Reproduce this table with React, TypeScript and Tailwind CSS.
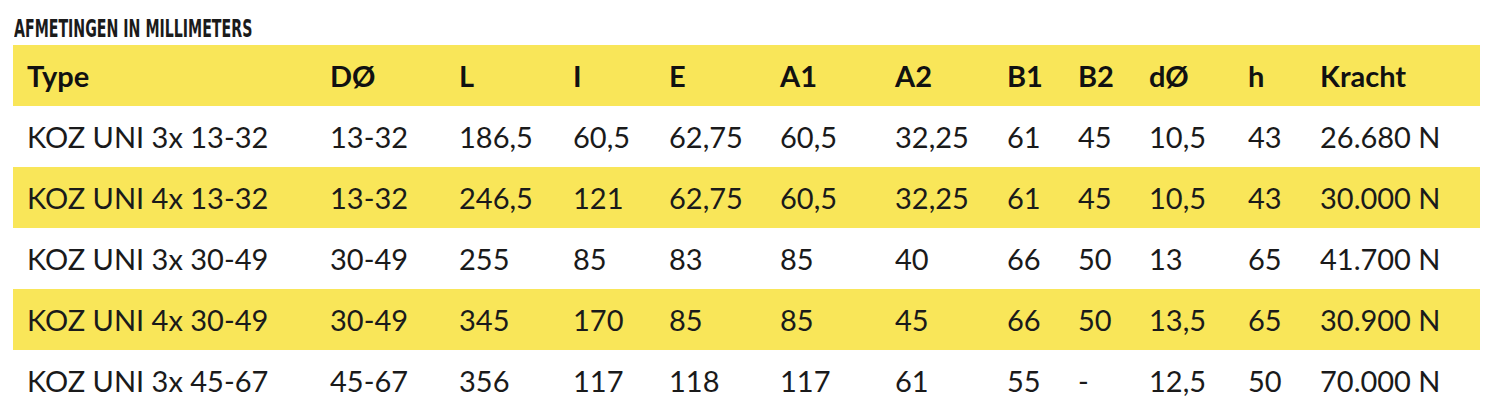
const columns = ['Type', 'DØ', 'L', 'I', 'E', 'A1', 'A2', 'B1', 'B2', 'dØ', 'h', 'Kracht']

const rows = [
  ['KOZ UNI 3x 13-32', '13-32', '186,5', '60,5', '62,75', '60,5', '32,25', '61', '45', '10,5', '43', '26.680 N'],
  ['KOZ UNI 4x 13-32', '13-32', '246,5', '121', '62,75', '60,5', '32,25', '61', '45', '10,5', '43', '30.000 N'],
  ['KOZ UNI 3x 30-49', '30-49', '255', '85', '83', '85', '40', '66', '50', '13', '65', '41.700 N'],
  ['KOZ UNI 4x 30-49', '30-49', '345', '170', '85', '85', '45', '66', '50', '13,5', '65', '30.900 N'],
  ['KOZ UNI 3x 45-67', '45-67', '356', '117', '118', '117', '61', '55', '-', '12,5', '50', '70.000 N'],
]

const gridCols =
  'grid grid-cols-[303px_129px_114px_96px_111px_115px_112px_71px_71px_99px_72px_174px]'

export default function App() {
  return (
    <div className="w-[1497px] h-[420px] bg-white overflow-hidden">
      {/* Title */}
      <div className="pl-[14px] pt-[16px] h-[45px]">
        <span
          className="inline-block origin-left scale-x-[0.63] text-[25px] leading-[25px] font-bold text-[#1b1b1b] whitespace-nowrap"
          style={{ fontFamily: "'DejaVu Sans Condensed', 'DejaVu Sans', sans-serif" }}
        >
          AFMETINGEN IN MILLIMETERS
        </span>
      </div>

      {/* Table */}
      <div className="ml-[13px] w-[1467px] font-['Lato',sans-serif]">
        <div className={`${gridCols} h-[61px] items-center bg-[#f9e659] text-[29px] font-bold text-[#111]`}>
          {columns.map((c) => (
            <div key={c} className="pl-[14px] whitespace-nowrap">
              {c}
            </div>
          ))}
        </div>
        {rows.map((r, i) => (
          <div
            key={r[0]}
            className={`${gridCols} h-[61px] items-center text-[29px] text-[#1a1a1a] ${i % 2 === 1 ? 'bg-[#f9e659]' : 'bg-white'}`}
          >
            {r.map((v, j) => (
              <div key={j} className="pl-[14px] whitespace-nowrap">
                {v}
              </div>
            ))}
          </div>
        ))}
      </div>
    </div>
  )
}
